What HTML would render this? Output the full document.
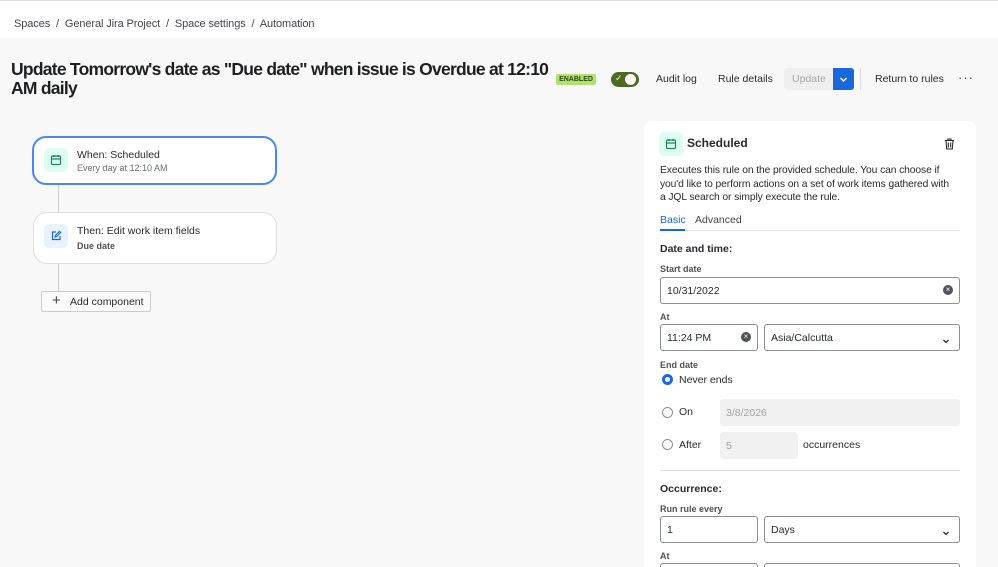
<!DOCTYPE html>
<html style="overflow:hidden;height:567px"><head><style>
*{box-sizing:border-box;margin:0;padding:0}
html,body{width:998px;height:567px;overflow:hidden}
body{background:#f8f8f8;font-family:"Liberation Sans",sans-serif;color:#292a2e;position:relative}
.a{position:absolute}
.top{left:0;top:0;width:998px;height:38px;background:#fff;border-top:1px solid #ddd}
.bc{left:14px;top:18px;font-size:11px;color:#44464d;letter-spacing:-0.1px}
.title{left:11px;top:60px;width:545px;font-size:17.5px;letter-spacing:-0.75px;font-weight:bold;line-height:19px;color:#1e1f21}
.btn{font-size:10.5px;color:#292a2e}
.card{background:#fff;border:1px solid #ddd;border-radius:14px}
.ic{width:24px;height:24px;border-radius:5px;display:flex;align-items:center;justify-content:center}
.lbl{font-size:9px;font-weight:bold;color:#505258}
.inp{background:#fff;border:1px solid #8c8f97;border-radius:3px;font-size:10.5px;padding-left:6px;display:flex;align-items:center}
.dis{background:#f1f1f1;border-radius:3px;font-size:10.5px;color:#a0a1a5;padding-left:6px;display:flex;align-items:center}
.radio{width:11px;height:11px;border-radius:50%;border:1px solid #8c8f97;background:#fff}
.t11{font-size:10.5px}
</style></head><body>
<div class="a top"></div>
<div class="a bc">Spaces &nbsp;/&nbsp; General Jira Project &nbsp;/&nbsp; Space settings &nbsp;/&nbsp; Automation</div>
<div class="a title">Update Tomorrow's date as "Due date" when issue is Overdue at 12:10 AM daily</div>

<div class="a" style="left:556px;top:74px;width:40px;height:11px;background:#b3df72;border-radius:2px;font-size:7px;font-weight:bold;color:#2d4a0e;text-align:center;line-height:11px">ENABLED</div>
<div class="a" style="left:611px;top:72px;width:28px;height:15px;background:#4c6b1f;border-radius:8px"></div>
<div class="a" style="left:625px;top:74px;width:11px;height:11px;background:#fff;border-radius:50%"></div>
<div class="a" style="left:615px;top:73px;font-size:9px;color:#fff">✓</div>
<div class="a btn" style="left:656px;top:73px">Audit log</div>
<div class="a btn" style="left:718px;top:73px">Rule details</div>
<div class="a" style="left:784px;top:68px;width:49px;height:22px;background:#efefef;border-radius:3px 0 0 3px;font-size:10.5px;color:#a6a7ab;padding:5px 0 0 8px">Update</div>
<div class="a" style="left:833px;top:68px;width:21px;height:22px;background:#1868db;border-radius:0 3px 3px 0"><svg width="21" height="22"><path d="M7.5 10l3 3 3-3" stroke="#fff" stroke-width="1.5" fill="none"/></svg></div>
<div class="a" style="left:860px;top:68px;width:1px;height:22px;background:#ddd"></div>
<div class="a btn" style="left:875px;top:73px">Return to rules</div>
<div class="a" style="left:958px;top:70px;font-size:13px;color:#44464d;letter-spacing:1px">···</div>

<div class="a" style="left:58px;top:185px;width:1px;height:28px;background:#ccc"></div>
<div class="a" style="left:58px;top:263px;width:1px;height:30px;background:#ccc"></div>
<div class="a card" style="left:32px;top:136px;width:245px;height:49px;border:2px solid #4b86f0"></div>
<div class="a ic" style="left:44px;top:148px;background:#dcfff1"><svg width="12" height="12" viewBox="0 0 12 12"><rect x="1.5" y="2" width="9" height="8.5" rx="1.3" fill="none" stroke="#1f845a" stroke-width="1.2"/><path d="M1.5 5h9M4 1v2M8 1v2" stroke="#1f845a" stroke-width="1.2"/></svg></div>
<div class="a t11" style="left:77px;top:149px;color:#292a2e">When: Scheduled</div>
<div class="a" style="left:77px;top:163px;font-size:9px;color:#6b6e76">Every day at 12:10 AM</div>
<div class="a card" style="left:33px;top:212px;width:244px;height:52px"></div>
<div class="a ic" style="left:44px;top:224px;background:#e9f2ff"><svg width="12" height="12" viewBox="0 0 12 12"><path d="M6 2H2.5v7.5H10V6" fill="none" stroke="#1868db" stroke-width="1.2"/><path d="M5 7l.4-1.6L9.5 1.3l1.2 1.2L6.6 6.6z" fill="none" stroke="#1868db" stroke-width="1.1"/></svg></div>
<div class="a t11" style="left:77px;top:225px">Then: Edit work item fields</div>
<div class="a" style="left:77px;top:241px;font-size:9px;font-weight:bold;color:#505258">Due date</div>
<div class="a" style="left:41px;top:291px;width:110px;height:21px;background:#fafafa;border:1px solid #ccc;border-radius:2px"></div>
<div class="a" style="left:52px;top:292px;font-size:15px;color:#44464d">+</div>
<div class="a t11" style="left:70px;top:296px;color:#292a2e">Add component</div>

<div class="a" style="left:644px;top:121px;width:332px;height:460px;background:#fff;border-radius:8px"></div>
<div class="a ic" style="left:659px;top:132px;background:#dcfff1"><svg width="12" height="12" viewBox="0 0 12 12"><rect x="1.5" y="2" width="9" height="8.5" rx="1.3" fill="none" stroke="#1f845a" stroke-width="1.2"/><path d="M1.5 5h9M4 1v2M8 1v2" stroke="#1f845a" stroke-width="1.2"/></svg></div>
<div class="a" style="left:687px;top:136px;font-size:12px;font-weight:bold">Scheduled</div>
<div class="a" style="left:944px;top:137px"><svg width="11" height="12" viewBox="0 0 11 12"><path d="M1 2.5h9M4 2.5V1h3v1.5M2 2.5l.7 8.5h5.6L9 2.5M4.3 4.5v5M6.7 4.5v5" fill="none" stroke="#292a2e" stroke-width="1.1"/></svg></div>
<div class="a" style="left:660px;top:164px;width:305px;font-size:10.3px;letter-spacing:-0.1px;line-height:13.5px;color:#292a2e">Executes this rule on the provided schedule. You can choose if<br>you'd like to perform actions on a set of work items gathered with<br>a JQL search or simply execute the rule.</div>
<div class="a t11" style="left:660px;top:214px;color:#1868db">Basic</div>
<div class="a t11" style="left:695px;top:214px;color:#44464d">Advanced</div>
<div class="a" style="left:660px;top:230px;width:300px;height:1px;background:#e4e4e4"></div>
<div class="a" style="left:660px;top:229px;width:25px;height:2px;background:#1868db"></div>
<div class="a" style="left:660px;top:243px;font-size:10.5px;font-weight:bold">Date and time:</div>
<div class="a lbl" style="left:660px;top:264px">Start date</div>
<div class="a inp" style="left:660px;top:277px;width:300px;height:27px">10/31/2022</div>
<div class="a" style="left:943px;top:285px;width:10px;height:10px;border-radius:50%;background:#505258;color:#fff;font-size:8px;line-height:10px;text-align:center">×</div>
<div class="a lbl" style="left:660px;top:312px">At</div>
<div class="a inp" style="left:660px;top:324px;width:98px;height:27px">11:24 PM</div>
<div class="a" style="left:741px;top:332px;width:10px;height:10px;border-radius:50%;background:#505258;color:#fff;font-size:8px;line-height:10px;text-align:center">×</div>
<div class="a inp" style="left:764px;top:324px;width:196px;height:27px">Asia/Calcutta</div>
<div class="a" style="left:941px;top:333px"><svg width="10" height="10"><path d="M2.5 4l2.5 2.5L7.5 4" stroke="#292a2e" stroke-width="1.3" fill="none"/></svg></div>
<div class="a lbl" style="left:660px;top:360px">End date</div>
<div class="a radio" style="left:662px;top:374px;border:3.5px solid #1868db"></div>
<div class="a t11" style="left:679px;top:374px">Never ends</div>
<div class="a radio" style="left:662px;top:407px"></div>
<div class="a t11" style="left:679px;top:406px">On</div>
<div class="a dis" style="left:720px;top:399px;width:240px;height:27px">3/8/2026</div>
<div class="a radio" style="left:662px;top:439px"></div>
<div class="a t11" style="left:679px;top:439px">After</div>
<div class="a dis" style="left:720px;top:432px;width:78px;height:27px">5</div>
<div class="a t11" style="left:803px;top:439px">occurrences</div>
<div class="a" style="left:660px;top:470px;width:300px;height:1px;background:#ddd"></div>
<div class="a" style="left:660px;top:483px;font-size:10.5px;font-weight:bold">Occurrence:</div>
<div class="a lbl" style="left:660px;top:504px">Run rule every</div>
<div class="a inp" style="left:660px;top:516px;width:98px;height:27px">1</div>
<div class="a inp" style="left:764px;top:516px;width:196px;height:27px">Days</div>
<div class="a" style="left:941px;top:525px"><svg width="10" height="10"><path d="M2.5 4l2.5 2.5L7.5 4" stroke="#292a2e" stroke-width="1.3" fill="none"/></svg></div>
<div class="a lbl" style="left:660px;top:551px">At</div>
<div class="a inp" style="left:660px;top:563px;width:98px;height:4px;border-bottom:none;border-radius:3px 3px 0 0"></div>
<div class="a inp" style="left:764px;top:563px;width:196px;height:4px;border-bottom:none;border-radius:3px 3px 0 0"></div>
</body></html>
